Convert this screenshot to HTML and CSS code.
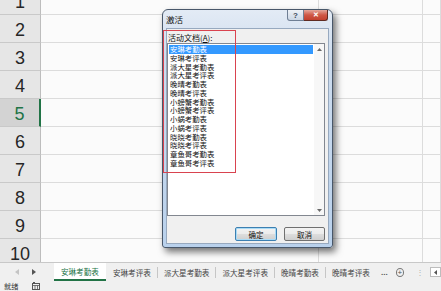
FILE: index.html
```html
<!DOCTYPE html>
<html lang="zh-CN">
<head>
  <meta charset="UTF-8" />
  <title>激活</title>
  <link rel="stylesheet" href="styles.css">
</head>
<body>
  <div class="app">
    <div class="sheet">
      <div class="grid">
        <div class="rh">1</div><div class="c"></div><div class="c"></div><div class="c"></div>
        <div class="rh">2</div><div class="c"></div><div class="c"></div><div class="c"></div>
        <div class="rh">3</div><div class="c"></div><div class="c"></div><div class="c"></div>
        <div class="rh">4</div><div class="c"></div><div class="c"></div><div class="c"></div>
        <div class="rh on">5</div><div class="c"></div><div class="c"></div><div class="c"></div>
        <div class="rh">6</div><div class="c"></div><div class="c"></div><div class="c"></div>
        <div class="rh">7</div><div class="c"></div><div class="c"></div><div class="c"></div>
        <div class="rh">8</div><div class="c"></div><div class="c"></div><div class="c"></div>
        <div class="rh">9</div><div class="c"></div><div class="c"></div><div class="c"></div>
        <div class="rh">10</div><div class="c"></div><div class="c"></div><div class="c"></div>
      </div>
    </div>

    <div class="tabs">
      <div class="nav">
        <svg class="tri off" width="4" height="6" viewBox="0 0 4 6"><path d="M4 0V6L0 3Z" /></svg>
        <svg class="tri" width="4" height="6" viewBox="0 0 4 6"><path d="M0 0V6L4 3Z" /></svg>
      </div>
      <div class="tab on">安琳考勤表</div>
      <div class="tab">安琳考评表</div>
      <div class="tab">派大星考勤表</div>
      <div class="tab">派大星考评表</div>
      <div class="tab">晚晴考勤表</div>
      <div class="tab">晚晴考评表</div>
      <div class="more">...</div>
      <div class="add">+</div>
      <div class="split">⋮</div>
      <div class="hbtn">
        <svg width="3" height="5" viewBox="0 0 3 5"><path d="M3 0V5L0 2.5Z" /></svg>
      </div>
    </div>

    <div class="status">
      <span>就绪</span>
      <svg class="macro" width="8" height="8" viewBox="0 0 8 8">
        <rect x="0.5" y="1.5" width="7" height="6" fill="none" stroke="#555" />
        <path d="M0.5 3.5H7.5M3 3.5V7.5M5.5 3.5V7.5" stroke="#555" stroke-width="0.8" />
        <rect x="1" y="0" width="2" height="2" fill="#555" />
      </svg>
    </div>

    <div class="dialog">
      <div class="titlebar">
        <span class="title">激活</span>
        <div class="caption">
          <span class="cap help">?</span>
          <span class="cap close">✕</span>
        </div>
      </div>
      <div class="client">
        <div class="label">活动文档(<u>A</u>):</div>
        <div class="listbox">
          <ul class="items">
            <li class="sel">安琳考勤表</li>
            <li>安琳考评表</li>
            <li>派大星考勤表</li>
            <li>派大星考评表</li>
            <li>晚晴考勤表</li>
            <li>晚晴考评表</li>
            <li>小螃蟹考勤表</li>
            <li>小螃蟹考评表</li>
            <li>小蜗考勤表</li>
            <li>小蜗考评表</li>
            <li>晓晓考勤表</li>
            <li>晓晓考评表</li>
            <li>章鱼哥考勤表</li>
            <li>章鱼哥考评表</li>
          </ul>
          <div class="vscroll">
            <svg width="5" height="3" viewBox="0 0 5 3"><path d="M0 3H5L2.5 0Z" /></svg>
            <svg width="5" height="3" viewBox="0 0 5 3"><path d="M0 0H5L2.5 3Z" /></svg>
          </div>
        </div>
        <div class="buttons">
          <button class="btn default">确定</button>
          <button class="btn">取消</button>
        </div>
      </div>
      <div class="mark"></div>
    </div>
  </div>
</body>
</html>
```

FILE: styles.css
```css
* {
  box-sizing: border-box;
}

body {
  margin: 0;
  width: 441px;
  height: 291px;
  overflow: hidden;
  background: #fff;
  font-family: "Noto Sans CJK SC", "Liberation Sans", sans-serif;
  color: #222;
}

.app {
  position: relative;
  display: flex;
  flex-direction: column;
  height: 291px;
}

/* worksheet */
.sheet {
  height: 262px;
  overflow: hidden;
  background: #fbfbfb;
}

.grid {
  display: grid;
  grid-template-columns: 41px 278px 104px 1fr;
  grid-auto-rows: 28px;
  margin-top: -13px;
}

.rh {
  display: flex;
  align-items: center;
  justify-content: center;
  padding-top: 3px;
  background: #e6e6e6;
  border-right: 1px solid #bdbdbd;
  border-bottom: 1px solid #c9c9c9;
  font: 18px "Liberation Sans", sans-serif;
  color: #262626;
}

.rh.on {
  background: #d3d3d3;
  color: #217346;
  border-right: 2px solid #217346;
}

.c {
  border-right: 1px solid #dcdcdc;
  border-bottom: 1px solid #dcdcdc;
}

/* sheet tabs */
.tabs {
  height: 19px;
  display: flex;
  align-items: center;
  background: #f0f0f0;
  border-top: 1px solid #c8c8c8;
  font-size: 7.6px;
  color: #444;
}

.nav {
  width: 58px;
  display: flex;
  align-items: center;
  gap: 13px;
  padding-left: 15px;
}

.tri {
  fill: #555;
}

.tri.off {
  fill: #c4c4c4;
}

.tab {
  height: 11px;
  line-height: 11px;
  padding: 0 6px;
  border-left: 1px solid #c6c6c6;
  white-space: nowrap;
}

.tab.on {
  align-self: stretch;
  height: auto;
  line-height: 17px;
  padding: 0 7px;
  border-left: none;
  background: #fff;
  color: #217346;
  border-bottom: 2px solid #217346;
}

.tab.on + .tab {
  border-left-color: transparent;
}

.more {
  margin-left: 5px;
  font: bold 8px "Liberation Sans", sans-serif;
  color: #555;
}

.add {
  width: 9px;
  height: 9px;
  margin-left: 8px;
  border: 1px solid #777;
  border-radius: 50%;
  font: 8px/7px "Liberation Sans", sans-serif;
  text-align: center;
  color: #555;
}

.split {
  margin-left: 12px;
  font-size: 8px;
  line-height: 10px;
  color: #b0b0b0;
}

.hbtn {
  width: 12px;
  height: 10px;
  margin-left: 6px;
  display: flex;
  align-items: center;
  justify-content: center;
  background: #fff;
  border: 1px solid #bdbdbd;
  fill: #555;
}

/* status bar */
.status {
  height: 10px;
  display: flex;
  align-items: center;
  gap: 14px;
  padding-left: 4px;
  background: #f0f0f0;
  font-size: 7.2px;
  line-height: 10px;
  color: #333;
}

/* activate dialog */
.dialog {
  position: absolute;
  left: 162px;
  top: 9px;
  width: 171px;
  height: 239px;
  display: flex;
  flex-direction: column;
  background: linear-gradient(to bottom, #e3ebf5, #cddcee 20%, #b9d1ec);
  border: 1px solid #48576a;
  border-radius: 6px 6px 3px 3px;
  box-shadow: 3px 4px 7px rgba(0, 0, 0, 0.55);
}

.titlebar {
  height: 18px;
  display: flex;
  justify-content: space-between;
  align-items: flex-start;
}

.title {
  padding-left: 3px;
  font-size: 8.5px;
  line-height: 18px;
  color: #111;
}

.caption {
  display: flex;
  margin-right: 4px;
}

.cap {
  height: 11px;
  display: flex;
  align-items: center;
  justify-content: center;
  font: bold 8px "Liberation Sans", sans-serif;
  color: #fff;
}

.help {
  width: 17px;
  background: linear-gradient(to bottom, #eef2f7, #cbd7e5);
  border: 1px solid #6f7f94;
  border-top: none;
  border-radius: 0 0 0 3px;
  color: #3d4a5a;
}

.close {
  width: 24px;
  background: linear-gradient(to bottom, #e4a79b, #cf5846 50%, #c2402e);
  border: 1px solid #5f2b22;
  border-top: none;
  border-left: none;
  border-radius: 0 0 3px 0;
  font-size: 7px;
}

.client {
  flex: 1;
  display: flex;
  flex-direction: column;
  margin: 0 3px 3px 3px;
  padding: 4px 3px 2px 0;
  background: #f0f0f0;
  border: 1px solid #97a9bf;
}

.label {
  height: 10px;
  padding-left: 1px;
  font-size: 8px;
  line-height: 10px;
  color: #111;
}

.label u {
  text-decoration-thickness: 0.5px;
}

.listbox {
  height: 173px;
  display: flex;
  background: #fff;
  border: 1px solid #828790;
}

.items {
  flex: 1;
  margin: 0;
  padding: 1px;
  list-style: none;
  font-size: 7.4px;
  color: #111;
}

.items li {
  height: 8.77px;
  line-height: 8.77px;
  padding-left: 1px;
  white-space: nowrap;
}

.items li.sel {
  background: #3399ff;
  color: #fff;
}

.vscroll {
  width: 10px;
  display: flex;
  flex-direction: column;
  justify-content: space-between;
  align-items: center;
  padding: 4px 0 3px;
  background: #f7f7f7;
  fill: #6a6a6a;
}

.buttons {
  display: flex;
  justify-content: flex-end;
  gap: 7px;
  margin-top: 11px;
}

.btn {
  width: 41px;
  height: 14px;
  padding: 0;
  font-family: inherit;
  font-size: 7.5px;
  color: #111;
  background: linear-gradient(to bottom, #f3f3f3, #ebebeb 50%, #dddddd 51%, #cfcfcf);
  border: 1px solid #707070;
  border-radius: 2px;
}

.btn.default {
  width: 42px;
  border-color: #3c7fb1;
  box-shadow: inset 0 0 0 1px #a9dbf6;
}

/* red annotation box */
.mark {
  position: absolute;
  left: 0;
  top: 20px;
  width: 73px;
  height: 143px;
  border: 1px solid #d9434f;
}
```
